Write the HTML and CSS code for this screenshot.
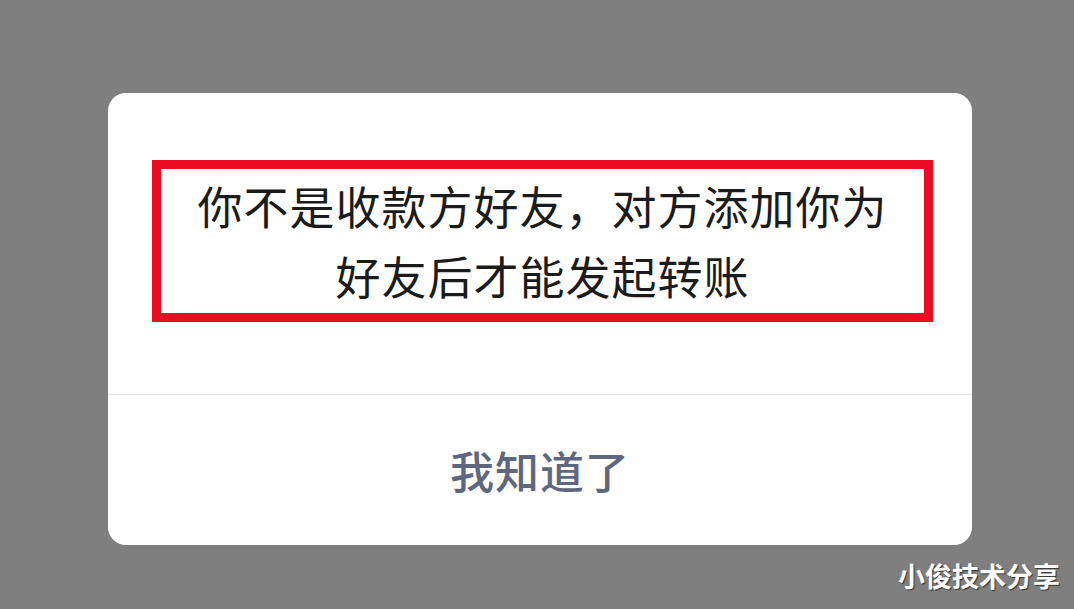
FILE: index.html
```html
<!DOCTYPE html>
<html lang="zh-CN">
<head>
    <meta charset="UTF-8">
    <meta name="viewport" content="width=device-width, initial-scale=1.0">
    <title>转账提示</title>
    <link rel="stylesheet" href="styles.css">
</head>
<body>
    <div class="dialog">
        <div class="dialog-body">
            <div class="highlight">
                <p class="message">你不是收款方好友，对方添加你为<br>好友后才能发起转账</p>
            </div>
        </div>
        <div class="dialog-footer">
            <span class="confirm">我知道了</span>
        </div>
    </div>

    <div class="watermark">小俊技术分享</div>
</body>
</html>
```

FILE: styles.css
```css
/* Reset */
* {
    margin: 0;
    padding: 0;
    box-sizing: border-box;
}

body {
    font-family: "Noto Sans CJK SC", "Noto Sans", sans-serif;
    background-color: #7f7f7f;
    width: 1074px;
    height: 609px;
    overflow: hidden;
    position: relative;
    padding: 93px 0 0 108px;
}

/* Dialog card */
.dialog {
    width: 864px;
    height: 452px;
    background-color: #fff;
    border-radius: 18px;
    display: flex;
    flex-direction: column;
}

.dialog-body {
    height: 302px;
    padding: 67px 39px 72px 44px;
    border-bottom: 1px solid #e5e5e5;
}

/* Red annotation box around the message */
.highlight {
    height: 100%;
    border: 9px solid #ec0c22;
    display: flex;
    align-items: center;
    justify-content: center;
}

.message {
    font-size: 45px;
    line-height: 70px;
    color: #1b1b1b;
    text-align: center;
    letter-spacing: 1px;
}

.dialog-footer {
    flex: 1;
    display: flex;
    align-items: center;
    justify-content: center;
}

.confirm {
    font-size: 44px;
    font-weight: 500;
    color: #5e6680;
    letter-spacing: 1px;
}

/* Watermark in the corner */
.watermark {
    position: absolute;
    right: 14px;
    bottom: 14px;
    font-size: 27px;
    font-weight: bold;
    color: #fff;
    text-shadow: 1px 1px 1px #333;
}
```
